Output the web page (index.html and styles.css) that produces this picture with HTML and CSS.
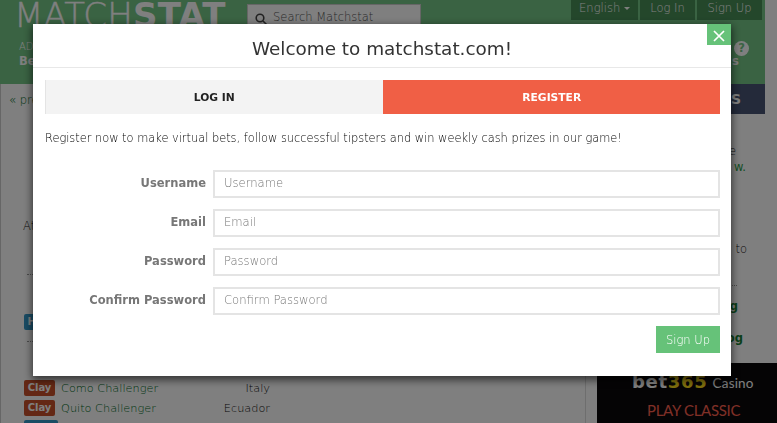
FILE: index.html
```html
<!DOCTYPE html>
<html lang="en">

<head>
    <meta charset="UTF-8">
    <meta name="viewport" content="width=device-width, initial-scale=1.0">
    <title>Matchstat</title>
    <link rel="stylesheet" href="styles.css">
</head>

<body>

    <div class="page">
        <!-- Site header -->
        <div class="header">
            <div class="top-row">
                <div class="logo"><span>MATCH</span><b>STAT</b></div>
                <div class="search">
                    <svg width="13" height="13" viewBox="0 0 13 13"><circle cx="5" cy="5" r="3.8" /><path d="M8 8l4 4" /></svg>
                    <span>Search Matchstat</span>
                </div>
                <ul class="menu">
                    <li class="lang">English <i class="caret"></i></li>
                    <li class="login">Log In</li>
                    <li class="signup">Sign Up</li>
                </ul>
            </div>
            <div class="sub-row">
                <div class="promo"><span>AD</span><b>Be</b></div>
                <div class="help"><i>?</i><span>s</span></div>
            </div>
        </div>

        <div class="columns">
            <div class="main">
                <a class="prev">« prev</a>
                <div class="group">At</div>
                <hr class="line">
                <div class="row hidden-row"><span class="badge hard">Hard</span></div>
                <hr class="line second">
                <div class="row"><span class="badge clay">Clay</span><a>Como Challenger</a><span class="country">Italy</span></div>
                <div class="row"><span class="badge clay">Clay</span><a>Quito Challenger</a><span class="country">Ecuador</span></div>
                <div class="row"><span class="badge hard"></span></div>
            </div>
            <div class="sidebar">
                <div class="side-title">S</div>
                <p class="side-text">e</p>
                <p class="side-link">w.</p>
                <p class="side-note">to</p>
                <hr class="side-line">
                <p class="side-blog">blog</p>
                <p class="side-blog last">blog</p>
                <div class="ad">
                    <div class="ad-logo"><b>bet</b><b class="yellow">365</b><span>Casino</span></div>
                    <div class="ad-text">PLAY CLASSIC</div>
                </div>
            </div>
        </div>
    </div>

    <!-- Register popup -->
    <div class="overlay">
        <div class="modal">
            <button class="close" aria-label="Close">
                <svg width="12" height="12" viewBox="0 0 12 12"><path d="M1 1l10 10M11 1L1 11" /></svg>
            </button>
            <h1>Welcome to matchstat.com!</h1>
            <div class="modal-body">
                <div class="tabs">
                    <div class="tab">LOG IN</div>
                    <div class="tab active">REGISTER</div>
                </div>
                <p class="intro">Register now to make virtual bets, follow successful tipsters and win weekly cash prizes in our game!</p>
                <form>
                    <div class="form-group">
                        <label for="username">Username</label>
                        <input type="text" id="username" placeholder="Username">
                    </div>
                    <div class="form-group">
                        <label for="email">Email</label>
                        <input type="text" id="email" placeholder="Email">
                    </div>
                    <div class="form-group">
                        <label for="password">Password</label>
                        <input type="password" id="password" placeholder="Password">
                    </div>
                    <div class="form-group">
                        <label for="confirm">Confirm Password</label>
                        <input type="password" id="confirm" placeholder="Confirm Password">
                    </div>
                    <button type="button" class="submit">Sign Up</button>
                </form>
            </div>
        </div>
    </div>

</body>

</html>
```

FILE: styles.css
```css
* {
    margin: 0;
    padding: 0;
    box-sizing: border-box;
}

body {
    font-family: "DejaVu Sans", sans-serif;
    font-size: 11.5px;
    font-weight: 200;
    color: #111;
    background-color: #fff;
    height: 423px;
    overflow: hidden;
}

b {
    font-weight: bold;
}

/* Header */
.header {
    width: 765px;
    height: 84px;
    background-color: #74c686;
    color: #fff;
}

.top-row {
    display: flex;
    height: 40px;
}

.logo {
    width: 247px;
    padding-left: 14px;
    font-size: 34px;
    line-height: 31px;
    letter-spacing: 0.2px;
    white-space: nowrap;
}

.logo span {
    -webkit-text-stroke: 0.4px #fff;
}

.search {
    display: flex;
    gap: 5px;
    width: 174px;
    height: 26px;
    margin-top: 4px;
    padding: 8px 0 0 7px;
    background-color: #fff;
    border: 1px solid #ccc;
    color: #555;
    font-size: 11.5px;
    line-height: 8px;
    white-space: nowrap;
}

.search svg {
    fill: none;
    stroke: #444;
    stroke-width: 1.6;
}

.menu {
    display: flex;
    gap: 2px;
    margin-left: 150px;
    list-style: none;
}

.menu li {
    height: 20px;
    background-color: #488e57;
    text-align: center;
    line-height: 16px;
}

.menu .lang { width: 67px; }
.menu .login { width: 55px; }
.menu .signup { width: 65px; }

.caret {
    display: inline-block;
    border: 3px solid transparent;
    border-top-color: #fff;
    border-bottom: 0;
    vertical-align: 2px;
}

.sub-row {
    display: flex;
    justify-content: space-between;
}

.promo {
    display: flex;
    flex-direction: column;
    padding-left: 19px;
    font-size: 10px;
    line-height: 14px;
}

.promo b {
    font-size: 11.5px;
}

.help {
    display: flex;
    flex-direction: column;
    width: 31px;
}

.help i {
    width: 15px;
    height: 15px;
    margin-top: 1px;
    border-radius: 50%;
    background-color: #fff;
    color: #74c686;
    font-style: normal;
    font-weight: bold;
    line-height: 15px;
    text-align: center;
}

.help span {
    margin-left: -2px;
    line-height: 11px;
    font-weight: bold;
}

/* Content */
.columns {
    display: flex;
    height: 339px;
}

.main {
    width: 586px;
    margin-right: 11px;
    border-left: 1px solid #ccc;
    border-right: 1px solid #ddd;
}

a {
    color: #006b1c;
}

.prev {
    display: block;
    height: 134px;
    padding: 8px 0 0 8px;
    line-height: 16px;
}

.group {
    height: 56px;
    padding-left: 22px;
    line-height: 16px;
}

.line {
    margin-left: 26px;
    border: 0;
    border-top: 1px dotted #999;
}

.row {
    display: flex;
    align-items: center;
    height: 20px;
    padding-left: 23px;
}

.hidden-row {
    height: 66px;
    padding-top: 27px;
}

.second {
    margin-bottom: 36px;
}

.badge {
    width: 31px;
    height: 16px;
    border-radius: 2px;
    color: #fff;
    font-size: 10px;
    font-weight: bold;
    line-height: 15px;
    text-align: center;
}

.clay { background-color: #c9502a; }

.hard {
    width: 34px;
    background-color: #3498c8;
}

.row a {
    width: 123px;
    margin-left: 6px;
    font-size: 11.3px;
}

.country {
    width: 86px;
    font-size: 11.3px;
    text-align: right;
}

/* Sidebar */
.sidebar {
    width: 180px;
    text-align: right;
}

.side-title {
    width: 168px;
    height: 30px;
    padding-right: 24px;
    background-color: #485474;
    color: #fff;
    font-size: 14px;
    font-weight: bold;
    line-height: 30px;
}

.side-text {
    padding: 29px 41px 0 0;
    line-height: 16px;
}

.side-link {
    height: 82px;
    padding-right: 31px;
    color: #2e9e4b;
    font-weight: normal;
    line-height: 16px;
}

.side-note {
    height: 44px;
    padding-right: 30px;
    line-height: 16px;
}

.side-line {
    margin-right: 40px;
    border: 0;
    border-top: 1px dotted #999;
}

.side-blog {
    height: 32px;
    margin-top: 12px;
    padding-right: 39px;
    color: #168034;
    font-weight: bold;
    line-height: 16px;
}

.side-blog.last {
    margin-top: 0;
    padding-right: 34px;
}

.ad {
    height: 61px;
    margin-top: 1px;
    padding-top: 9px;
    background-color: #0a080a;
    color: #fff;
    text-align: left;
}

.ad-logo {
    display: flex;
    align-items: baseline;
    height: 28px;
    padding-left: 35px;
    font-size: 18px;
    line-height: 20px;
    letter-spacing: 0.7px;
}

.ad-logo .yellow { color: #ffdf1b; }

.ad-logo span {
    margin-left: 5px;
    font-family: Lato, sans-serif;
    font-size: 13.5px;
    font-weight: 400;
    letter-spacing: 0.2px;
}

.ad-text {
    padding-left: 50px;
    color: #ff604f;
    font-family: Lato, sans-serif;
    font-size: 15px;
    font-weight: 400;
    line-height: 20px;
    letter-spacing: -0.3px;
}

/* Popup */
.overlay {
    position: fixed;
    inset: 0;
    background-color: rgba(0, 0, 0, 0.5);
}

.modal {
    position: relative;
    width: 698px;
    height: 352px;
    margin: 24px 0 0 33px;
    background-color: #fff;
    box-shadow: 0 3px 8px 1px rgba(0, 0, 0, 0.6);
}

.close {
    position: absolute;
    top: 0;
    right: 0;
    display: flex;
    align-items: center;
    justify-content: center;
    width: 24px;
    height: 21px;
    padding-top: 2px;
    background-color: #66c279;
    border: 0;
}

.close svg {
    stroke: #fff;
    stroke-width: 1.7;
}

.modal h1 {
    height: 44px;
    border-bottom: 1px solid #e8e8e8;
    color: #333;
    font-size: 18.4px;
    font-weight: normal;
    line-height: 50px;
    text-align: center;
}

.modal-body {
    padding: 12px 11px 0 12px;
}

.tabs {
    display: flex;
    height: 34px;
    font-size: 10.7px;
    font-weight: bold;
    line-height: 35px;
    text-align: center;
}

.tab {
    width: 338px;
    background-color: #f3f3f3;
    border-left: 1px solid #e4e4e4;
    color: #222;
}

.tab.active {
    background-color: #f05f45;
    border-color: #f05f45;
    color: #fff;
}

.intro {
    height: 56px;
    padding-top: 16px;
    color: #000;
    font-size: 11.4px;
    line-height: 16px;
    letter-spacing: -0.01px;
    white-space: nowrap;
}

.form-group {
    display: flex;
    height: 28px;
    margin-bottom: 11px;
}

.form-group label {
    width: 168px;
    padding-right: 7px;
    color: #777;
    font-weight: bold;
    line-height: 27px;
    text-align: right;
}

.form-group input {
    flex: 1;
    padding: 0 9px 2px;
    border: 2px solid #e4e4e4;
    font-family: inherit;
    font-size: 11.6px;
    font-weight: 200;
}

.form-group input::placeholder {
    color: #777;
}

.submit {
    display: block;
    width: 64px;
    height: 27px;
    margin-left: auto;
    background-color: #66c279;
    border: 0;
    color: #fff;
    font-family: inherit;
    font-size: 11.5px;
    font-weight: 200;
}
```
